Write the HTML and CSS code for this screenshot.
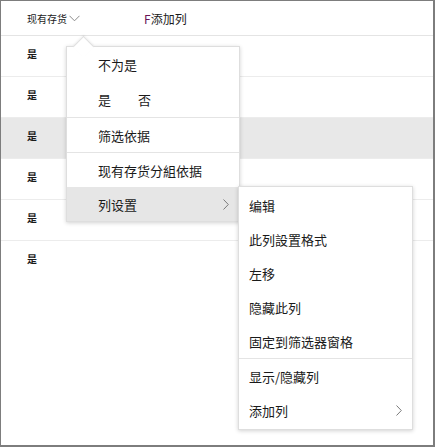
FILE: index.html
```html
<!DOCTYPE html>
<html lang="zh">
<head>
<meta charset="utf-8">
<link rel="stylesheet" href="styles.css">
</head>
<body>
<div class="frame">
  <div class="header">
    <div class="col-title">现有存货<svg class="down" width="11" height="7" viewBox="0 0 11 7"><polyline points="0.5,0.8 5.5,5.8 10.5,0.8" fill="none" stroke="#8a8a8a" stroke-width="1"/></svg></div>
    <div class="add-col"><span class="f">F</span>添加列</div>
  </div>
  <div class="row">是</div>
  <div class="row">是</div>
  <div class="row hover">是</div>
  <div class="row">是</div>
  <div class="row">是</div>
  <div class="row last">是</div>

  <div class="menu main-menu">
    <div class="caret"></div>
    <div class="item">不为是</div>
    <div class="item pair"><span>是</span><span class="no">否</span></div>
    <div class="sep"></div>
    <div class="item">筛选依据</div>
    <div class="sep"></div>
    <div class="item">现有存货分組依据</div>
    <div class="item active">列设置<svg class="chev" width="6" height="11" viewBox="0 0 6 11"><polyline points="0.5,0.5 5.3,5.5 0.5,10.5" fill="none" stroke="#7a7a7a" stroke-width="1"/></svg></div>
  </div>

  <div class="menu sub-menu">
    <div class="item">编辑</div>
    <div class="item">此列設置格式</div>
    <div class="item">左移</div>
    <div class="item">隐藏此列</div>
    <div class="item">固定到筛选器窗格</div>
    <div class="sep"></div>
    <div class="item">显示/隐藏列</div>
    <div class="item">添加列<svg class="chev" width="6" height="11" viewBox="0 0 6 11"><polyline points="0.5,0.5 5.3,5.5 0.5,10.5" fill="none" stroke="#7a7a7a" stroke-width="1"/></svg></div>
  </div>
</div>
</body>
</html>
```

FILE: styles.css
```css
html, body {
  margin: 0;
  padding: 0;
  background: #fff;
}
body {
  font-family: "Noto Sans CJK SC", "Noto Sans", sans-serif;
  color: #1a1a1a;
}
.frame {
  position: relative;
  width: 432px;
  height: 444px;
  border: 1px solid #7d7d7d;
  border-right-width: 2px;
  border-bottom-width: 2px;
  box-sizing: content-box;
  overflow: hidden;
}
.header {
  display: flex;
  align-items: center;
  height: 34px;
  border-bottom: 1px solid #e4e4e4;
}
.col-title {
  width: 143px;
  padding-left: 26px;
  font-size: 10px;
  display: flex;
  align-items: center;
  box-sizing: border-box;
}
.down {
  margin-left: 2px;
  margin-top: 1px;
}
.add-col {
  font-size: 12px;
}
.f {
  color: #6a1456;
}
.row {
  height: 40px;
  border-bottom: 1px solid #ececec;
  padding-left: 26px;
  font-size: 10px;
  line-height: 36px;
  font-weight: 600;
}
.row.hover {
  background: #e8e8e8;
}
.row.last {
  border-bottom: none;
}
.menu {
  position: absolute;
  background: #fff;
  border: 1px solid #dedede;
  box-shadow: 0 1px 4px rgba(0, 0, 0, 0.18);
  font-size: 13px;
  box-sizing: border-box;
}
.main-menu {
  left: 65px;
  top: 45px;
  width: 174px;
}
.caret {
  position: absolute;
  left: 9px;
  top: -8px;
  width: 14px;
  height: 14px;
  background: #fff;
  border-left: 1px solid #dedede;
  border-top: 1px solid #dedede;
  transform: rotate(45deg);
  box-shadow: -1px -1px 2px rgba(0, 0, 0, 0.06);
}
.item {
  position: relative;
  display: flex;
  align-items: center;
  height: 34px;
  padding-left: 31px;
  padding-right: 10px;
}
.item.pair {
  height: 36px;
}
.item .no {
  margin-left: 27px;
}
.item.active {
  background: #e6e6e6;
}
.chev {
  margin-left: auto;
}
.sep {
  height: 1px;
  background: #e4e4e4;
}
.sub-menu {
  left: 237px;
  top: 185px;
  width: 175px;
  padding-top: 1px;
  padding-bottom: 2px;
}
.sub-menu .item {
  height: 34px;
  padding-left: 10px;
  padding-right: 10px;
}
```
